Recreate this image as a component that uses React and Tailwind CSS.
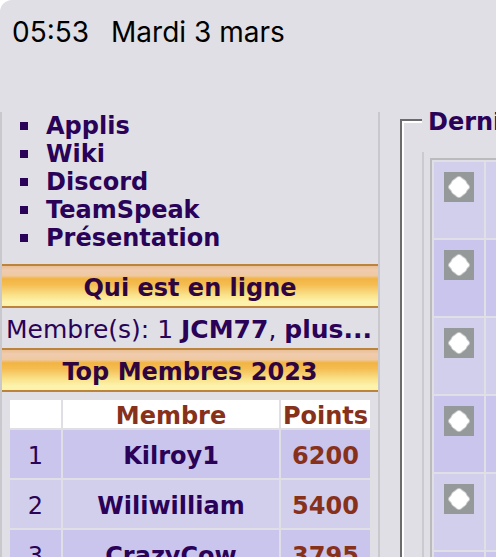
import React from 'react';

const links = ['Applis', 'Wiki', 'Discord', 'TeamSpeak', 'Présentation'];

const members = [
  { rank: 1, name: 'Kilroy1', points: 6200 },
  { rank: 2, name: 'Wiliwilliam', points: 5400 },
  { rank: 3, name: 'CrazyCow', points: 3795 },
];

const topics = [1, 2, 3, 4, 5, 6];

function StatusBar() {
  return (
    <header className="flex h-28 shrink-0 items-start gap-[22px] px-3 pt-4 font-['Inter',sans-serif] text-[28px] leading-8 text-black">
      <time>05:53</time>
      <span>Mardi 3 mars</span>
    </header>
  );
}

function BlockTitle({ children }) {
  return (
    <h2 className="border-y-2 border-[#bb833c] bg-[linear-gradient(#e9bf94_0%,#f0cbae_10%,#efc9a2_24%,#f2b443_32%,#f4bc50_46%,#fae189_72%,#fcf3ae_90%,#fdf2a6_100%)] pt-2 pb-1 text-center font-bold text-[#2f0540]">
      {children}
    </h2>
  );
}

function TopicIcon() {
  return (
    <svg width="30" height="30" viewBox="0 0 30 30" aria-hidden="true">
      <rect width="30" height="30" fill="#959999" />
      <path
        d="M15 5 C17 5 17.5 6.5 19 7.5 C21 8.5 22 9.5 22.5 11.5 C23.5 13 25 13.5 25 15 C25 16.5 23.5 17 22.5 18.5 C22 20.5 21 21.5 19 22.5 C17.5 23.5 17 25 15 25 C13 25 12.5 23.5 11 22.5 C9 21.5 8 20.5 7.5 18.5 C6.5 17 5 16.5 5 15 C5 13.5 6.5 13 7.5 11.5 C8 9.5 9 8.5 11 7.5 C12.5 6.5 13 5 15 5 Z"
        fill="#fff"
        stroke="#fff"
        strokeOpacity="0.5"
        strokeWidth="2"
        strokeLinejoin="round"
      />
    </svg>
  );
}

function Sidebar() {
  return (
    <aside className="w-[380px] shrink-0 border-x-2 border-[#c9c9cd]">
      <ul className="pb-3">
        {links.map((link) => (
          <li key={link} className="flex items-center gap-[18px] pl-[18px]">
            <span className="size-2 bg-[#2a0258]" />
            <a href="#" className="font-bold">{link}</a>
          </li>
        ))}
      </ul>

      <BlockTitle>Qui est en ligne</BlockTitle>
      <p className="px-1 pt-2 pb-1 text-[25px] leading-7 whitespace-nowrap">
        Membre(s): 1 <a href="#" className="font-bold">JCM77</a>,{' '}
        <a href="#" className="font-bold">plus...</a>
      </p>

      <BlockTitle>Top Membres 2023</BlockTitle>
      <div className="p-1.5">
        <table className="w-full table-fixed border-separate border-spacing-0.5 text-center">
          <thead>
            <tr className="bg-white leading-6 text-[#87311b]">
              <td className="w-[51px]" />
              <th className="pt-1 font-bold">Membre</th>
              <th className="w-[89px] pt-1 font-bold">Points</th>
            </tr>
          </thead>
          <tbody>
            {members.map((member) => (
              <tr key={member.rank} className="odd:bg-[#cac5ec] even:bg-[#d2cfed]">
                <td className="pt-3 pb-2">{member.rank}</td>
                <td className="pt-3 pb-2 font-bold">
                  <a href="#">{member.name}</a>
                </td>
                <td className="pt-3 pb-2 font-bold text-[#87311b]">{member.points}</td>
              </tr>
            ))}
          </tbody>
        </table>
      </div>
    </aside>
  );
}

function LatestTopics() {
  return (
    <fieldset className="min-w-[400px] flex-1 border-2 border-[#6b6b6b] px-5 shadow-[inset_2px_2px_0_#fff]">
      {/* the legend has the page colour, to interrupt the white inner line too */}
      <legend className="bg-[#e0dfe5] px-1.5 pt-1 leading-3 font-bold">Derni</legend>
      <div className="mt-6 border-l-2 border-[#cbcbcf] p-1.5">
        <table className="w-full table-fixed border-separate border-spacing-0.5 border-2 border-[#bbbbbd]">
          <tbody>
            {topics.map((topic) => (
              <tr key={topic} className="odd:bg-[#d2cfed] even:bg-[#cac5ec]">
                <td className="h-[76px] w-[50px] px-2.5 pt-2.5 align-top">
                  <TopicIcon />
                </td>
                <td />
              </tr>
            ))}
          </tbody>
        </table>
      </div>
    </fieldset>
  );
}

export default function App() {
  return (
    <div className="bg-white">
      <div className="flex h-screen flex-col overflow-hidden rounded-tl-xl bg-[#e0dfe5]">
        <StatusBar />
        <main className="flex min-h-0 flex-1 items-start gap-5 overflow-hidden font-['DejaVu_Sans',sans-serif] text-[24px] leading-7 text-[#2a0258]">
          <Sidebar />
          <LatestTopics />
        </main>
      </div>
    </div>
  );
}
